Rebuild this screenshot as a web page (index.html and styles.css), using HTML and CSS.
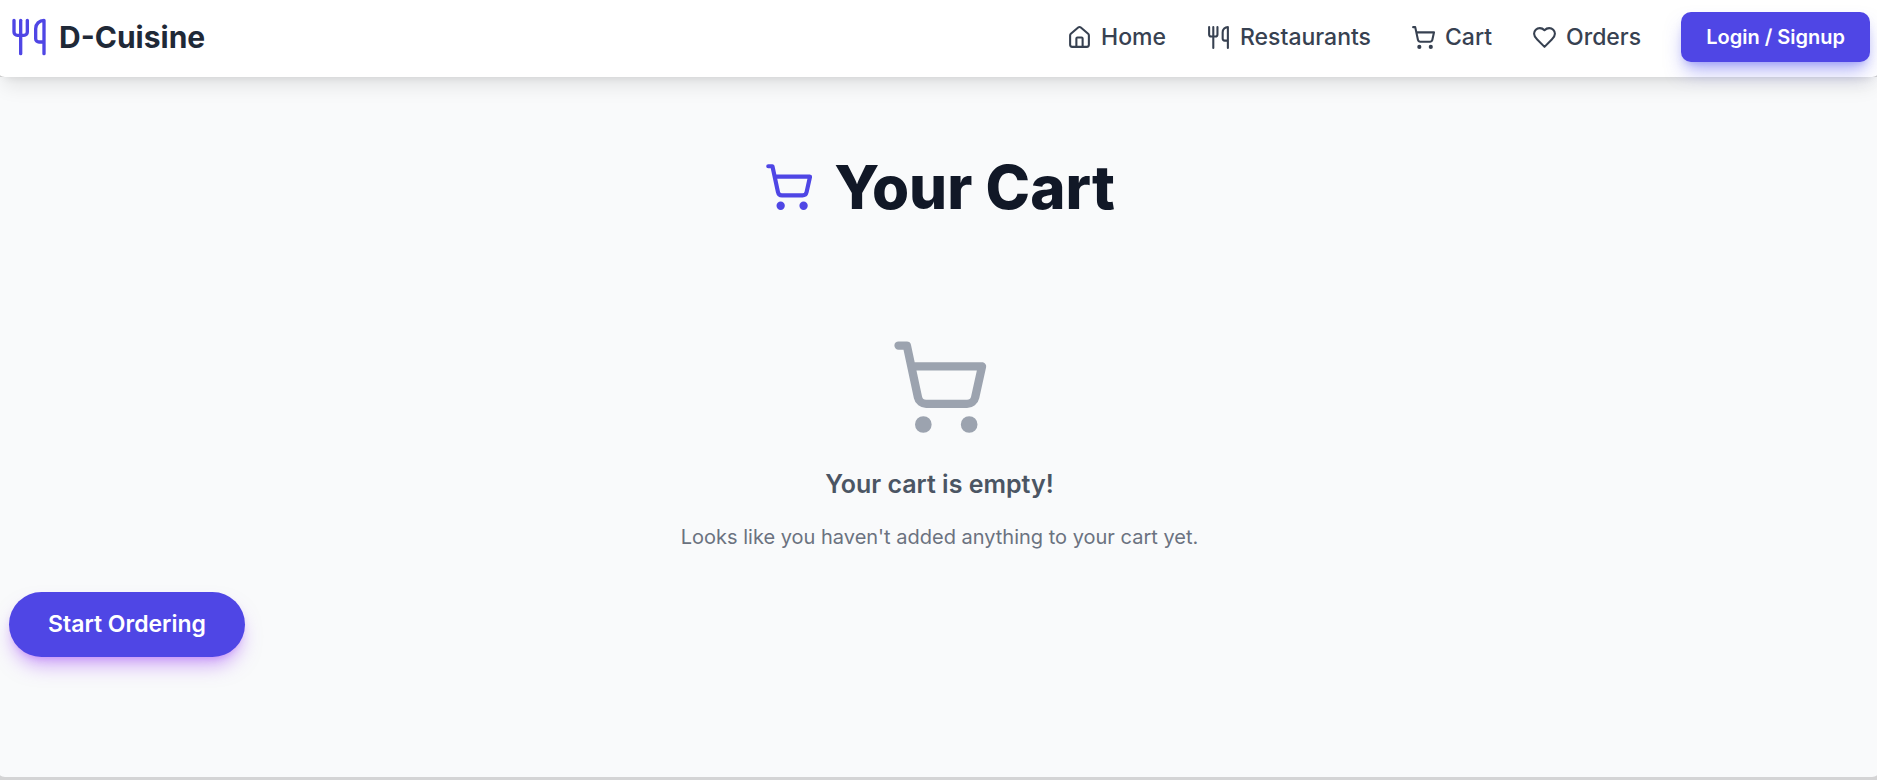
FILE: index.html
```html
<!DOCTYPE html>
<html lang="en">
<head>
<meta charset="utf-8">
<meta name="viewport" content="width=device-width, initial-scale=1">
<title>D-Cuisine</title>
<link rel="stylesheet" href="styles.css">
</head>
<body>
<svg class="sprite" aria-hidden="true">
  <symbol id="utensils" viewBox="0 0 24 24"><path d="M3 2v7c0 1.1.9 2 2 2h4a2 2 0 0 0 2-2V2"/><path d="M7 2v20"/><path d="M21 15V2a5 5 0 0 0-5 5v6c0 1.1.9 2 2 2h3Zm0 0v7"/></symbol>
  <symbol id="cart" viewBox="0 0 24 24"><circle cx="8" cy="21" r="1"/><circle cx="19" cy="21" r="1"/><path d="M2.05 2.05h2l2.66 12.42a2 2 0 0 0 2 1.58h9.78a2 2 0 0 0 1.95-1.57l1.65-7.43H5.12"/></symbol>
  <symbol id="house" viewBox="0 0 24 24"><path d="M15 21v-8a1 1 0 0 0-1-1h-4a1 1 0 0 0-1 1v8"/><path d="M3 10a2 2 0 0 1 .709-1.528l7-5.999a2 2 0 0 1 2.582 0l7 5.999A2 2 0 0 1 21 10v9a2 2 0 0 1-2 2H5a2 2 0 0 1-2-2z"/></symbol>
  <symbol id="heart" viewBox="0 0 24 24"><path d="M19 14c1.49-1.46 3-3.21 3-5.5A5.5 5.5 0 0 0 16.5 3c-1.76 0-3 .5-4.5 2-1.5-1.5-2.74-2-4.5-2A5.5 5.5 0 0 0 2 8.5c0 2.3 1.5 4.05 3 5.5l7 7Z"/></symbol>
</svg>
<header class="navbar">
  <a class="brand" href="#"><svg class="icon icon-brand"><use href="#utensils"/></svg>D-Cuisine</a>
  <nav class="nav">
    <a class="nav-link" href="#"><svg class="icon icon-nav"><use href="#house"/></svg>Home</a>
    <a class="nav-link" href="#"><svg class="icon icon-nav"><use href="#utensils"/></svg>Restaurants</a>
    <a class="nav-link" href="#"><svg class="icon icon-nav"><use href="#cart"/></svg>Cart</a>
    <a class="nav-link" href="#"><svg class="icon icon-nav"><use href="#heart"/></svg>Orders</a>
    <button class="login" type="button">Login / Signup</button>
  </nav>
</header>
<main class="page">
  <h1 class="title"><svg class="icon icon-title"><use href="#cart"/></svg>Your Cart</h1>
  <section class="empty">
    <svg class="icon icon-empty"><use href="#cart"/></svg>
    <p class="empty-title">Your cart is empty!</p>
    <p class="empty-text">Looks like you haven't added anything to your cart yet.</p>
  </section>
  <button class="start" type="button">Start Ordering</button>
</main>
</body>
</html>
```
FILE: styles.css
```css
* {
  box-sizing: border-box;
}

body {
  display: flex;
  flex-direction: column;
  min-height: 100vh;
  margin: 0;
  background: #d4d4d5;
  font-family: Inter, "Liberation Sans", sans-serif;
  color: #111827;
}

.sprite {
  display: none;
}

.icon {
  flex: none;
  fill: none;
  stroke: currentColor;
  stroke-width: 2;
  stroke-linecap: round;
  stroke-linejoin: round;
}

.icon-brand {
  width: 40px;
  height: 40px;
  color: #4f46e5;
}

.icon-nav {
  width: 25px;
  height: 25px;
}

.icon-title {
  width: 50px;
  height: 50px;
  color: #4f46e5;
}

.icon-empty {
  width: 100px;
  height: 100px;
  color: #9ca3af;
}

.navbar {
  position: relative;
  display: flex;
  align-items: center;
  justify-content: space-between;
  padding: 12px 7px 15px 9px;
  background: #ffffff;
  border-radius: 0 0 8px 8px / 0 0 2px 2px;
  box-shadow: 0 12px 19px -4px rgba(0, 0, 0, 0.1), 0 5px 8px -5px rgba(0, 0, 0, 0.1);
}

.brand {
  display: flex;
  align-items: center;
  gap: 10px;
  font-size: 30px;
  font-weight: 700;
  color: #1f2937;
  text-decoration: none;
}

.nav {
  display: flex;
  align-items: center;
  gap: 40px;
}

.nav-link {
  display: flex;
  align-items: center;
  gap: 9px;
  font-size: 23px;
  font-weight: 500;
  color: #374151;
  text-decoration: none;
}

.login {
  padding: 10px 25px;
  border: 0;
  border-radius: 10px;
  background: #4f46e5;
  color: #ffffff;
  font-family: inherit;
  font-size: 20px;
  font-weight: 600;
  line-height: 30px;
  box-shadow: 0 12px 19px -4px rgba(99, 102, 241, 0.5), 0 5px 8px -5px rgba(99, 102, 241, 0.5);
}

.page {
  padding: 80px 7px 120px 9px;
  background: #f9fafb;
  border-radius: 0 0 8px 8px / 0 0 2px 2px;
}

.title {
  display: flex;
  align-items: center;
  justify-content: center;
  gap: 20px;
  margin: 0;
  font-size: 60px;
  font-weight: 800;
  line-height: 60px;
}

.empty {
  display: flex;
  flex-direction: column;
  align-items: center;
  padding-top: 120px;
}

.empty-title {
  margin: 30px 0 0;
  font-size: 25px;
  font-weight: 600;
  line-height: 35px;
  color: #4b5563;
}

.empty-text {
  margin: 20px 0 0;
  font-size: 20px;
  line-height: 30px;
  color: #6b7280;
}

.start {
  display: block;
  margin-top: 40px;
  padding: 15px 39px;
  border: 0;
  border-radius: 40px;
  background: #4f46e5;
  color: #ffffff;
  font-family: inherit;
  font-size: 23px;
  font-weight: 600;
  line-height: 35px;
  box-shadow: 0 12px 19px -4px rgba(168, 85, 247, 0.5), 0 5px 8px -5px rgba(168, 85, 247, 0.5);
}
```
